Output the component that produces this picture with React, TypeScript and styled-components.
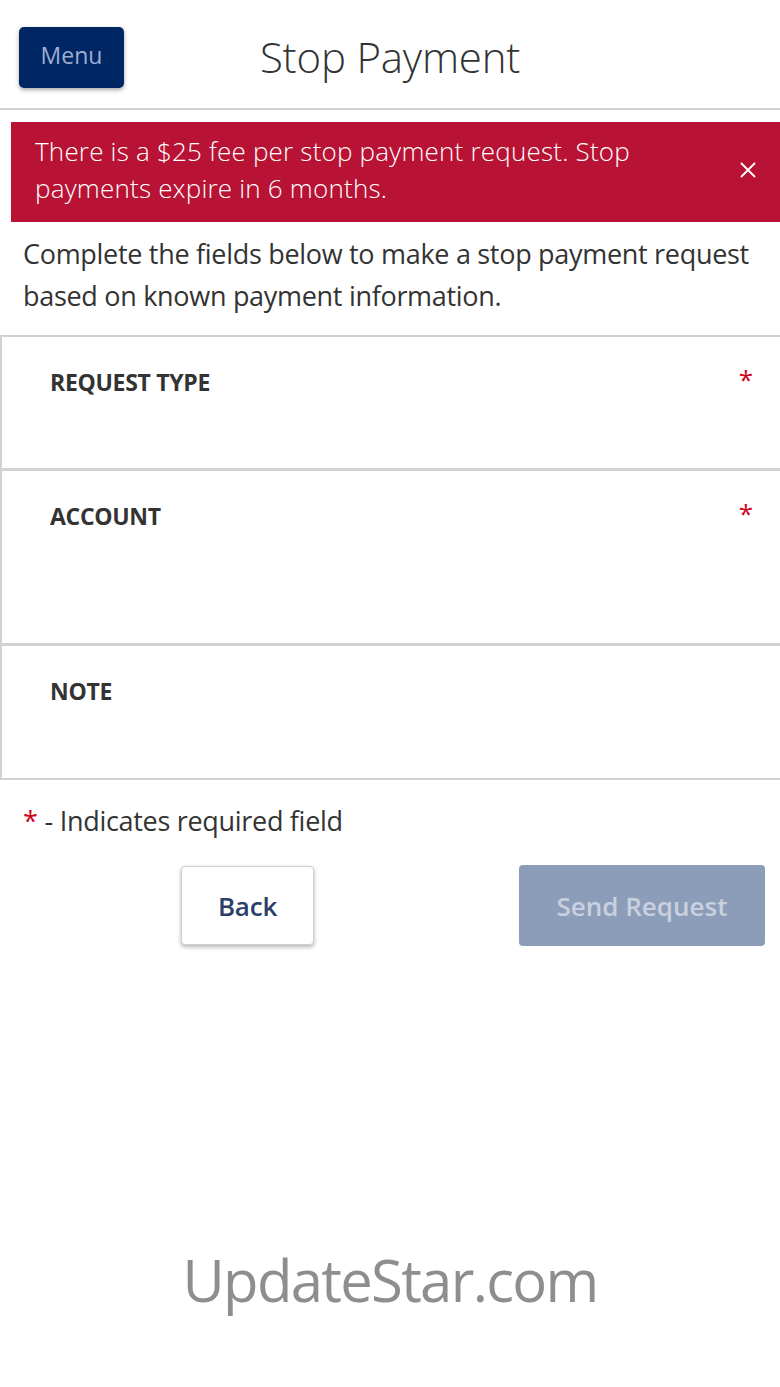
import React from "react";
import styled, { createGlobalStyle } from "styled-components";

const Global = createGlobalStyle`
  html, body { margin: 0; padding: 0; background: #fff; }
  body { font-family: "Open Sans", "Liberation Sans", sans-serif; color: #333; }
  * { box-sizing: border-box; }
`;

const Page = styled.div`
  width: 780px;
  min-height: 1387px;
  overflow: hidden;
  display: flex;
  flex-direction: column;
`;

const Header = styled.header`
  height: 110px;
  border-bottom: 2px solid #d2d2d2;
  display: grid;
  grid-template-columns: 1fr auto 1fr;
  align-items: center;
  padding: 7px 19px 0 19px;
`;

const MenuButton = styled.button`
  justify-self: start;
  width: 105px;
  height: 61px;
  background: #002664;
  color: #9eaed3;
  border: none;
  border-radius: 5px;
  box-shadow: 0 2px 4px rgba(0, 0, 0, 0.35);
  font-family: inherit;
  font-size: 23px;
  padding: 0 0 6px;
`;

const Title = styled.h1`
  margin: 0;
  font-weight: 300;
  font-size: 42px;
  color: #333;
  letter-spacing: -0.2px;
  padding-bottom: 2px;
`;

const Banner = styled.div`
  margin: 12px 0 0 11px;
  background: #b81234;
  color: #fff;
  height: 100px;
  display: flex;
  align-items: center;
  justify-content: space-between;
  padding: 0 23px 4px 24px;
`;

const BannerText = styled.p`
  margin: 0;
  font-weight: 300;
  font-size: 26px;
  line-height: 37px;
  max-width: 660px;
  letter-spacing: 0.2px;
`;

const Intro = styled.p`
  margin: 11px 15px 0 23px;
  font-size: 27px;
  line-height: 42px;
  color: #333;
  letter-spacing: -0.3px;
`;

const Fields = styled.div`
  margin-top: 18px;
  border-top: 2px solid #d2d2d2;
  border-left: 2px solid #d2d2d2;
  border-bottom: 2px solid #d2d2d2;
`;

const Field = styled.div<{ $h: number; $last?: boolean }>`
  height: ${(p) => p.$h}px;
  display: flex;
  justify-content: space-between;
  align-items: flex-start;
  padding: 34px 27px 0 48px;
  border-bottom: ${(p) => (p.$last ? "none" : "3px solid #d2d2d2")};
`;

const Label = styled.span`
  font-weight: 700;
  font-size: 23px;
  line-height: 23px;
  color: #333;
  letter-spacing: -0.3px;
`;

const Star = styled.span`
  color: #d0021b;
  font-size: 26px;
  line-height: 26px;
  margin-top: -5px;
`;

const Required = styled.p`
  margin: 23px 0 0 23px;
  font-size: 27px;
  line-height: 36px;
  color: #333;
  letter-spacing: -0.3px;
`;

const ReqStar = styled.span`
  color: #d0021b;
  margin-right: 7px;
`;

const Buttons = styled.div`
  display: flex;
  align-items: center;
  justify-content: space-between;
  margin: 26px 15px 0 181px;
`;

const BackButton = styled.button`
  width: 133px;
  height: 79px;
  background: #fff;
  border: 1px solid #cfcfcf;
  border-radius: 4px;
  box-shadow: 0 2px 4px rgba(0, 0, 0, 0.3);
  color: #2b4068;
  font-family: inherit;
  font-weight: 600;
  font-size: 26px;
  letter-spacing: -0.2px;
  padding: 0;
`;

const SendButton = styled.button`
  width: 246px;
  height: 81px;
  background: #8c9db9;
  border: none;
  border-radius: 4px;
  color: #c9d1df;
  font-family: inherit;
  font-weight: 600;
  font-size: 26px;
  letter-spacing: 0;
  padding: 0;
`;

const Watermark = styled.div`
  margin-top: 294px;
  text-align: center;
  font-family: "Open Sans", sans-serif;
  font-size: 58px;
  color: #8e8e8e;
  letter-spacing: -1.7px;
`;

const CloseIcon = () => (
  <svg width="18" height="18" viewBox="0 0 18 18" aria-hidden>
    <path d="M2 2 L16 16 M16 2 L2 16" stroke="#fff" strokeWidth="1.8" />
  </svg>
);

export default function App() {
  return (
    <Page>
      <Global />
      <Header>
        <MenuButton>Menu</MenuButton>
        <Title>Stop Payment</Title>
        <span />
      </Header>
      <Banner>
        <BannerText>
          There is a $25 fee per stop payment request. Stop payments expire in 6 months.
        </BannerText>
        <CloseIcon />
      </Banner>
      <Intro>
        Complete the fields below to make a stop payment request based on known payment information.
      </Intro>
      <Fields>
        <Field $h={134}>
          <Label>REQUEST TYPE</Label>
          <Star>*</Star>
        </Field>
        <Field $h={175}>
          <Label>ACCOUNT</Label>
          <Star>*</Star>
        </Field>
        <Field $h={132} $last>
          <Label>NOTE</Label>
        </Field>
      </Fields>
      <Required>
        <ReqStar>*</ReqStar>- Indicates required field
      </Required>
      <Buttons>
        <BackButton>Back</BackButton>
        <SendButton>Send Request</SendButton>
      </Buttons>
      <Watermark>UpdateStar.com</Watermark>
    </Page>
  );
}
